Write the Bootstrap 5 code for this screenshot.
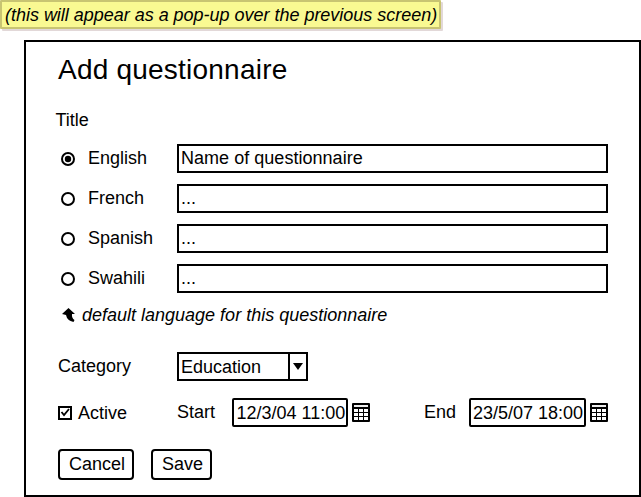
<!DOCTYPE html>
<html lang="en">
<head>
<meta charset="utf-8">
<title>Add questionnaire</title>
<link href="https://cdn.jsdelivr.net/npm/bootstrap@5.3.0/dist/css/bootstrap.min.css" rel="stylesheet">
<style>
body{font:18px/20px "Liberation Sans",Arial,sans-serif;color:#000;background:#fff;width:641px;height:497px;overflow:hidden}
.note{width:441px;height:29px;border:2px solid #c8c472;background:#f9f992;box-shadow:2px 2px 0 #e2d8d8;padding:3px 0 0 3px;font-style:italic;white-space:nowrap;border-radius:1px;letter-spacing:-.02px}
.dialog{width:617px;height:457px;margin:11px 0 0 24px;border:2px solid #000;padding:12px 31px 0 32px}
.dialog h1{font-size:28px;line-height:32px;letter-spacing:.22px;margin:0;font-weight:400}
.title-label{margin:24px 0 14px -2.5px}
.lang-row{height:29px;margin-bottom:11px}
.lang-row svg{margin:1px 0 0 3px}
.lang-name{width:89px;margin-left:13px;padding-bottom:1px}
.box{border:2px solid #000;height:29px;padding:2px 0 0 2px;background:#fff;color:#000;white-space:nowrap}
.lang-row .box{letter-spacing:.03px}
.hint{font-style:italic;height:20px}
.hint span{margin:1px 0 0 -1px}
.category{margin-top:28px;height:29px}
.category-name{width:119px;padding-top:4px}
.select-box{width:131px;padding-top:3px}
.arrow-cell{width:18px;border-left:2px solid #000;margin:-3px 0 0}
.dates{margin-top:17px;height:29px}
.active-name{width:99px;margin-left:6px;padding-top:5px}
.start-name{width:55px;padding-top:4px}
.end-name{width:45px;margin-left:54px;padding-top:4px}
.date-box{width:116px;border-radius:2px;padding:3px 0 0 2.5px;flex:none}
.end-box{width:117px;padding-left:2px}
.cal{margin:5px 0 0 4px;flex:none}
.actions{margin-top:22px;gap:17px}
.action{height:31px;border:2px solid #000;border-radius:4px;background:#fff;color:#000;font:18px/20px "Liberation Sans",Arial,sans-serif;padding:0 0 1px;text-align:center}
.cancel{width:76px;padding-left:2px}
.save{width:61px;padding-left:2px}
</style>
</head>
<body>
<svg width="0" height="0" class="d-none">
<symbol id="cal" viewBox="0 0 18 19"><rect width="18" height="19" rx="1"/><path fill="#eee" d="M2 2h14v2H2z"/><path fill="#fff" d="M2 6h4v3H2zM7 6h4v3H7zM12 6h4v3h-4zM2 10h4v3H2zM7 10h4v3H7zM12 10h4v3h-4zM2 14h4v3H2zM7 14h4v3H7zM12 14h4v3h-4z"/></symbol>
</svg>
<div class="note">(this will appear as a pop-up over the previous screen)</div>
<main class="dialog">
<h1>Add questionnaire</h1>
<div class="title-label">Title</div>
<div class="lang-row d-flex align-items-center"><svg width="14" height="14"><circle cx="7" cy="7" r="6" fill="none" stroke="#000" stroke-width="2"/><circle cx="7" cy="7" r="3.2"/></svg><span class="lang-name">English</span><div class="box flex-grow-1">Name of questionnaire</div></div>
<div class="lang-row d-flex align-items-center"><svg width="14" height="14"><circle cx="7" cy="7" r="6" fill="none" stroke="#000" stroke-width="2"/></svg><span class="lang-name">French</span><div class="box flex-grow-1">...</div></div>
<div class="lang-row d-flex align-items-center"><svg width="14" height="14"><circle cx="7" cy="7" r="6" fill="none" stroke="#000" stroke-width="2"/></svg><span class="lang-name">Spanish</span><div class="box flex-grow-1">...</div></div>
<div class="lang-row d-flex align-items-center"><svg width="14" height="14"><circle cx="7" cy="7" r="6" fill="none" stroke="#000" stroke-width="2"/></svg><span class="lang-name">Swahili</span><div class="box flex-grow-1">...</div></div>
<div class="hint d-flex"><svg class="mt-1 ms-1 me-2" width="13" height="15"><path d="M6.500 0L13 6H10Q9.500 10 12.500 12L11.500 14Q5 12.500 4 7L0 6z"/></svg><span>default language for this questionnaire</span></div>
<div class="category d-flex"><span class="category-name">Category</span><div class="box select-box d-flex"><span class="flex-grow-1">Education</span><span class="arrow-cell"><svg class="d-block" width="16" height="25"><path d="M3 9h10l-5 7z"/></svg></span></div></div>
<div class="dates d-flex">
<svg class="flex-shrink-0" width="14" height="29"><rect x="1" y="9" width="12" height="12" fill="none" stroke="#000" stroke-width="2"/><path d="M3.500 14l2.500 3 5-6" fill="none" stroke="#000" stroke-width="1.800"/></svg>
<span class="active-name">Active</span><span class="start-name">Start</span><div class="box date-box">12/3/04 11:00</div><svg class="cal" width="18" height="19"><use href="#cal"/></svg>
<span class="end-name">End</span><div class="box date-box end-box">23/5/07 18:00</div><svg class="cal" width="18" height="19"><use href="#cal"/></svg>
</div>
<div class="actions d-flex"><button class="action cancel" type="button">Cancel</button><button class="action save" type="button">Save</button></div>
</main>
<script src="https://cdn.jsdelivr.net/npm/bootstrap@5.3.0/dist/js/bootstrap.bundle.min.js"></script>
</body>
</html>
